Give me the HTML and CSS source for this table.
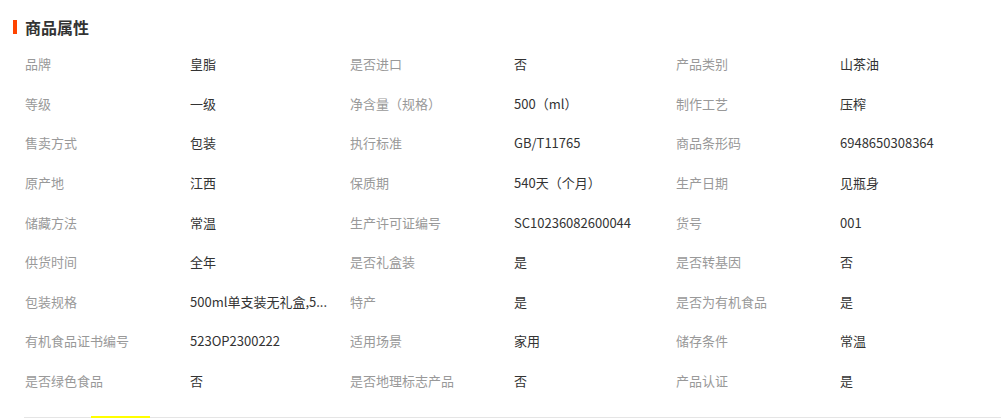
FILE: index.html
```html
<!DOCTYPE html>
<html lang="zh-CN">
<head>
    <meta charset="UTF-8">
    <meta name="viewport" content="width=device-width, initial-scale=1.0">
    <title>商品属性</title>
    <link rel="stylesheet" href="styles.css">
</head>
<body>
    <div class="attrs">
        <h2 class="attrs-title">商品属性</h2>
        <div class="attrs-grid">
            <span class="k">品牌</span><span class="v">皇脂</span>
            <span class="k">是否进口</span><span class="v">否</span>
            <span class="k">产品类别</span><span class="v">山茶油</span>

            <span class="k">等级</span><span class="v">一级</span>
            <span class="k">净含量（规格）</span><span class="v">500（ml）</span>
            <span class="k">制作工艺</span><span class="v">压榨</span>

            <span class="k">售卖方式</span><span class="v">包装</span>
            <span class="k">执行标准</span><span class="v">GB/T11765</span>
            <span class="k">商品条形码</span><span class="v">6948650308364</span>

            <span class="k">原产地</span><span class="v">江西</span>
            <span class="k">保质期</span><span class="v">540天（个月）</span>
            <span class="k">生产日期</span><span class="v">见瓶身</span>

            <span class="k">储藏方法</span><span class="v">常温</span>
            <span class="k">生产许可证编号</span><span class="v">SC10236082600044</span>
            <span class="k">货号</span><span class="v">001</span>

            <span class="k">供货时间</span><span class="v">全年</span>
            <span class="k">是否礼盒装</span><span class="v">是</span>
            <span class="k">是否转基因</span><span class="v">否</span>

            <span class="k">包装规格</span><span class="v" title="500ml单支装无礼盒,500ml双支装礼盒">500ml单支装无礼盒,5...</span>
            <span class="k">特产</span><span class="v">是</span>
            <span class="k">是否为有机食品</span><span class="v">是</span>

            <span class="k">有机食品证书编号</span><span class="v">523OP2300222</span>
            <span class="k">适用场景</span><span class="v">家用</span>
            <span class="k">储存条件</span><span class="v">常温</span>

            <span class="k">是否绿色食品</span><span class="v">否</span>
            <span class="k">是否地理标志产品</span><span class="v">否</span>
            <span class="k">产品认证</span><span class="v">是</span>
        </div>
        <div class="tabs-line"><span class="tab-active"></span></div>
    </div>
</body>
</html>
```

FILE: styles.css
```css
body {
    margin: 0;
    padding: 0;
    background-color: #fff;
    font-family: "Noto Sans CJK SC", "Noto Sans", sans-serif;
    font-size: 13px;
    color: #333;
}
.attrs {
    padding-top: 16px;
}
.attrs-title {
    margin: 0 0 0 13px;
    display: flex;
    align-items: center;
    gap: 8px;
    font-size: 16px;
    font-weight: bold;
    line-height: 22px;
    color: #333;
}
.attrs-title::before {
    content: "";
    display: block;
    width: 4px;
    height: 14px;
    background-color: #ff4400;
}
.attrs-grid {
    margin-top: 6px;
    padding-left: 25px;
    display: grid;
    grid-template-columns: 165px 160px 164px 162px 164px 1fr;
    grid-auto-rows: 39.6px;
    align-items: center;
}
.k {
    color: #999;
    white-space: nowrap;
}
.v {
    color: #333;
    white-space: nowrap;
}
.tabs-line {
    position: relative;
    margin: 17px 0 0 24px;
    border-top: 1px solid #e5e5e5;
}
.tab-active {
    position: absolute;
    left: 67px;
    top: -2px;
    width: 59px;
    height: 2px;
    background-color: #ffff00;
}
```
